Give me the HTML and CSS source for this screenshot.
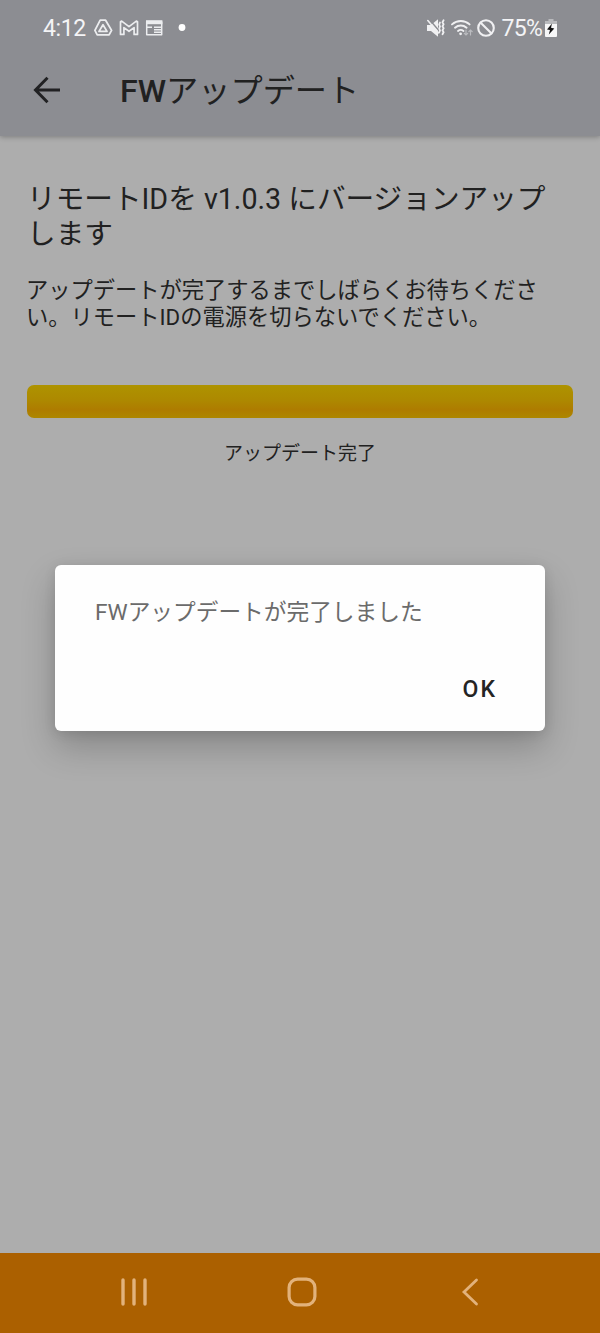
FILE: index.html
```html
<!DOCTYPE html>
<html lang="ja">
<head>
<meta charset="utf-8">
<title>FWアップデート</title>
<link rel="stylesheet" href="styles.css">
</head>
<body>
<div class="screen">
  <header class="top">
    <div class="status">
      <span class="clock">4:12</span>
      <svg class="notices" width="96" height="20" viewBox="0 0 96 20" fill="none" stroke="#ecedef" stroke-width="1.8" stroke-linejoin="round">
        <path d="M6.2 2.2h5.4l6 10.2-2.5 4.4H3.2L.9 12.4z"/>
        <path d="M9 6.7l4 6.7H5z"/>
        <path d="M26.5 16.4V3.8l1.2-.7 7.3 5.5 7.3-5.5 1.2.7v12.6h-3.4V9.6L35 13.3l-5.1-3.7v6.8z" stroke-width="1.7"/>
        <path d="M52.7 3.5v13.2h15V3.5" stroke-width="1.5"/>
        <path d="M52 2.2h16.4v4H52z" fill="#ecedef" stroke="none"/>
        <path d="M60 9.2h7M60 11.7h7M60 14.2h7M53 9.2h5" stroke-width="1.4"/>
        <circle cx="88" cy="9.5" r="3.4" fill="#fff" stroke="none"/>
      </svg>
      <svg class="signals" width="72" height="22" viewBox="0 0 72 22" fill="none" stroke="#f0f0f2" stroke-width="1.9" stroke-linecap="round">
        <path d="M1 8h4l7-5.7v17.4L5 14H1z" fill="#f0f0f2" stroke="none"/>
        <path d="M3.5 2.8l10 11.5" stroke="#8c8d92" stroke-width="1.4"/>
        <path d="M1.8 3.6l10.5 12.2" stroke-width="1.6"/>
        <path d="M14 5.5l-.8 2 .8 2-.8 2 .8 2-.8 2M17.6 3.2l-1.1 2 1.1 2-1.1 2 1.1 2-1.1 2 1.1 2-1.1 2" stroke-width="1.8"/>
        <path d="M26 7.4c5.1-4.6 12.5-4.6 17.6 0M29 10.7c3.4-3 8.2-3 11.6 0M32 14c1.7-1.4 3.8-1.4 5.5 0"/>
        <circle cx="34.6" cy="16.8" r="1.4" fill="#f0f0f2" stroke="none"/>
        <path d="M40 13v5m-1.7-1.7L40 18l1.7-1.7M44.5 18v-5m-1.7 1.7l1.7-1.7 1.7 1.7" stroke="#bbbcc0" stroke-width="1.2"/>
        <circle cx="60" cy="11" r="7.8" stroke-width="2.1"/>
        <path d="M54.7 5.7l10.6 10.6" stroke-width="2.1"/>
      </svg>
      <span class="percent">75%</span>
      <svg class="battery" width="12" height="18" viewBox="0 0 12 18">
        <path d="M3.5 0h5v2H12v5H0V2h3.5z" fill="#b9babd"/>
        <path d="M0 5h12v12a1 1 0 0 1-1 1H1a1 1 0 0 1-1-1z" fill="#f7f7f8"/>
        <path d="M7 4.5L2 10.4l3 .7-1.2 4.4 5.5-6-3.3-.7z" fill="#111"/>
      </svg>
    </div>
    <div class="appbar">
      <svg class="back" width="28" height="28" viewBox="0 0 28 28" fill="none" stroke="#212123" stroke-width="3">
        <path d="M27 14H2.5M14.5 1.8L2.5 14l12 12.2"/>
      </svg>
      <h1 class="title"><span class="latin">FW</span>アップデート</h1>
    </div>
  </header>
  <main class="content">
    <h2 class="heading">リモートIDを v1.0.3 にバージョンアップ<br>します</h2>
    <p class="body">アップデートが完了するまでしばらくお待ちくださ<br>い。リモートIDの電源を切らないでください。</p>
    <div class="progress"></div>
    <p class="state">アップデート完了</p>
  </main>
  <nav class="nav">
    <svg width="28" height="30" viewBox="0 0 28 30" fill="none" stroke="#e2b27b" stroke-width="3.4" stroke-linecap="round">
      <path d="M3 3v24M14 3v24M25 3v24"/>
    </svg>
    <svg class="home" width="30" height="30" viewBox="0 0 30 30" fill="none" stroke="#e2b27b" stroke-width="3.2">
      <rect x="2.1" y="2.1" width="25.8" height="25.8" rx="8.5"/>
    </svg>
    <svg width="18" height="30" viewBox="0 0 18 30" fill="none" stroke="#e2b27b" stroke-width="2.8" stroke-linecap="round">
      <path d="M15.5 3L3 15l12.5 12"/>
    </svg>
  </nav>
  <div class="dialog" role="dialog">
    <p class="message">FWアップデートが完了しました</p>
    <button class="ok">OK</button>
  </div>
</div>
</body>
</html>
```
FILE: styles.css
```css
* { box-sizing: border-box; margin: 0; padding: 0; }
body {
  background: #adadad;
  color: #212121;
  font-family: Roboto, "Noto Sans CJK JP", sans-serif;
}
svg { display: block; flex: none; }
.screen {
  position: relative;
  display: flex;
  flex-direction: column;
  height: 1333px;
  overflow: hidden;
}
.top {
  height: 136px;
  background: #8c8d92;
  box-shadow: 0 1px 5px rgba(0, 0, 0, .28);
}
.status {
  display: flex;
  align-items: center;
  height: 56px;
  padding: 0 43px;
  color: #f4f4f6;
  font-size: 23px;
}
.clock { width: 52px; letter-spacing: -.4px; }
.signals { margin-left: 236px; }
.percent { width: 44px; margin-left: 3px; letter-spacing: -.7px; white-space: nowrap; }
.appbar {
  display: flex;
  align-items: center;
  height: 68px;
  padding-left: 33px;
}
.title {
  margin-left: 59px;
  padding-top: 2px;
  font-size: 32.2px;
  line-height: 44px;
  font-weight: 400;
  white-space: nowrap;
}
.latin { font-weight: 500; }
.content { flex: 1; padding: 46px 27px 0; }
.heading {
  font-size: 28.65px;
  line-height: 35px;
  font-weight: 400;
  white-space: nowrap;
}
.body {
  margin-top: 25px;
  margin-left: -1px;
  font-size: 22.25px;
  line-height: 27px;
  white-space: nowrap;
}
.progress {
  height: 33px;
  margin-top: 53.5px;
  border-radius: 7px;
  background: linear-gradient(#ae9300 0%, #ad8900 45%, #ae7c00 75%, #ad8700 100%);
}
.state {
  margin-top: 22.5px;
  font-size: 19px;
  line-height: 28px;
  text-align: center;
}
.nav {
  display: flex;
  align-items: center;
  height: 80px;
  padding: 0 121px 2px 120px;
  background: #ab6000;
}
.home { margin: 0 auto 0 139px; }
.dialog {
  position: absolute;
  top: 565px;
  left: 55px;
  width: 490px;
  height: 166px;
  display: flex;
  flex-direction: column;
  justify-content: space-between;
  padding: 31px 48px 25px 40px;
  border-radius: 6px;
  background: #fefefe;
  box-shadow: 0 16px 34px rgba(0, 0, 0, .22), 0 2px 12px rgba(0, 0, 0, .1);
}
.message {
  color: #6b6b6b;
  font-size: 22.7px;
  line-height: 34px;
  white-space: nowrap;
}
.ok {
  align-self: flex-end;
  border: 0;
  background: none;
  color: #242424;
  font: 500 23px/32px Roboto, sans-serif;
  letter-spacing: 2px;
}
```
